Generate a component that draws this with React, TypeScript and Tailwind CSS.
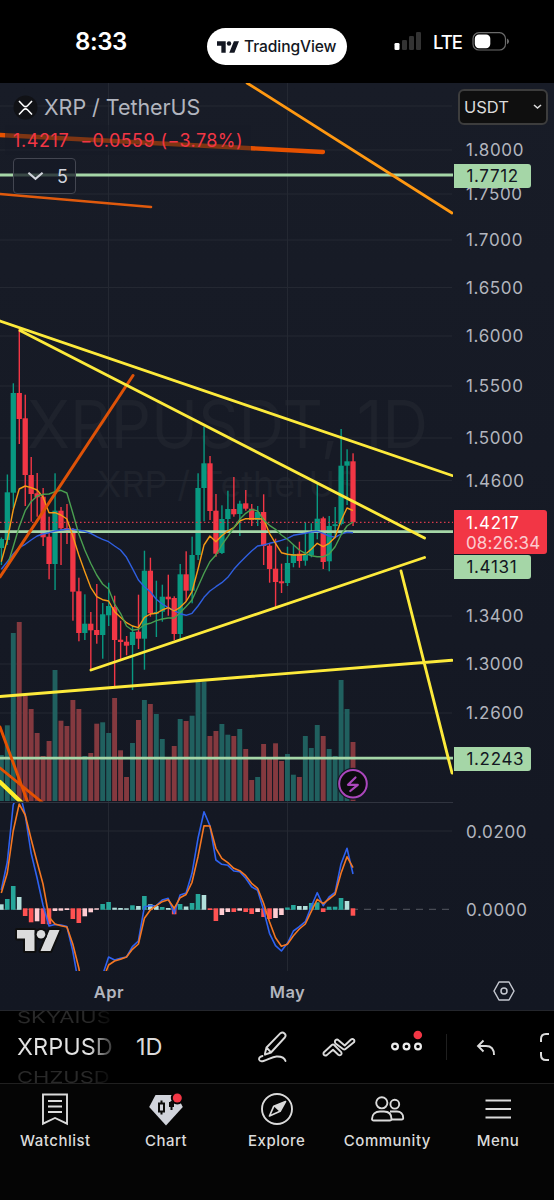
import type { ReactNode } from 'react';

type Candle = ['g' | 'r', number, number, number, number, number];

const FIRST = -18;
const xAt = (i: number) => 108.6 + 5.96 * (i + FIRST);

// direction, high, low, body top, body bottom, volume top
const CANDLES: Candle[] = [
  ['g', 537.5, 565, 539, 548, 755],
  ['g', 474.5, 545, 492.3, 540, 725.3],
  ['g', 383.3, 508.3, 393, 492.7, 633],
  ['r', 329, 444, 393, 419, 622],
  ['r', 394.7, 506, 418.3, 475, 696],
  ['r', 457, 521.7, 475, 494, 709],
  ['r', 473, 516.7, 493.3, 497.3, 733],
  ['r', 488, 546, 496.7, 537.3, 756],
  ['r', 516.7, 579.3, 536.7, 564, 741],
  ['g', 473.3, 590, 510.7, 564, 670],
  ['r', 507, 565, 510.7, 528.3, 720.7],
  ['r', 504, 544, 528, 530.7, 726],
  ['r', 528, 620.7, 529, 591.7, 700],
  ['r', 577.7, 641.3, 591.3, 633, 709],
  ['g', 594.3, 640, 623.7, 633, 756],
  ['r', 612, 670.7, 623.7, 630.3, 753],
  ['r', 584, 643.7, 630, 635, 723.7],
  ['g', 603, 658.7, 614.3, 635, 722.3],
  ['g', 582.7, 626, 606, 615.3, 733],
  ['r', 595.7, 688, 607, 640, 698],
  ['r', 620.7, 660, 639.7, 642, 750.3],
  ['r', 636, 655.3, 641.7, 645.7, 777],
  ['g', 625.7, 690, 632, 645, 743],
  ['r', 594.7, 649, 631.7, 638.7, 720],
  ['g', 550.7, 669.7, 570.7, 638.7, 700],
  ['r', 557.7, 616.7, 570.7, 613.3, 704],
  ['g', 580.7, 637, 612, 613.5, 714],
  ['g', 584.7, 621.7, 596.7, 611.7, 739],
  ['r', 574.7, 615.7, 596.7, 599.3, 758],
  ['r', 596.3, 640, 598, 634, 746],
  ['g', 564, 639, 574.3, 634, 719],
  ['r', 551.3, 601, 574.3, 590.7, 721],
  ['g', 536.7, 603.3, 555, 590.7, 715.7],
  ['g', 473.3, 560, 488, 555, 681.7],
  ['g', 426.7, 521.3, 463.3, 488, 681.7],
  ['r', 456, 520, 463.3, 511, 736],
  ['r', 494, 556.7, 510.7, 553.7, 731],
  ['g', 505.3, 554, 519, 553, 724],
  ['g', 490.7, 532.7, 509, 519, 734.7],
  ['r', 477, 516.7, 509, 514.3, 736],
  ['g', 500.7, 536, 503.7, 514, 729],
  ['r', 490, 510.7, 503.3, 508.7, 749],
  ['r', 504, 526, 508.7, 520, 780],
  ['g', 506, 526, 512, 520, 777],
  ['r', 494.3, 565, 512, 546, 744],
  ['r', 544, 582.7, 545.7, 569, 758.3],
  ['r', 538.7, 608, 568.7, 582, 743.3],
  ['r', 563.7, 593, 581.3, 583.3, 761],
  ['g', 546.7, 586, 563, 583, 754],
  ['g', 544.7, 567.3, 554, 563, 774.7],
  ['r', 541.7, 567.7, 553.7, 561, 777],
  ['g', 522.3, 565.7, 555, 560.7, 736],
  ['g', 523.3, 557.3, 532.7, 555.3, 748],
  ['g', 482.3, 539.3, 518.7, 532.7, 725],
  ['r', 516.7, 569, 518.3, 562, 736],
  ['g', 516, 571.3, 526, 561.3, 749],
  ['g', 507, 538.3, 524.3, 526, 756],
  ['g', 429, 525.3, 465.7, 524, 680],
  ['g', 449.3, 505, 461.3, 465.7, 709],
  ['r', 453.3, 526, 461.3, 522.3, 742],
];

const MA_FAST = [561.7, 540, 510, 489, 486, 487.7, 490, 497, 512.7, 512.7, 515, 519, 536, 555, 571.7, 587.3, 596.7, 599.7, 601, 611.7, 617.3, 622.7, 626, 627.7, 617.3, 614, 613.3, 610, 607.7, 611, 607.3, 601.5, 591.7, 569.3, 545, 536, 541.7, 535.7, 531, 527.7, 521, 518.7, 518.7, 518.7, 519, 533.3, 543.3, 552.7, 554.3, 555, 555, 554.3, 549.3, 543.3, 546.7, 543.3, 537.3, 520.7, 508, 510.5];
const MA_MID = [575, 566, 546.7, 526.7, 510.7, 501.7, 496, 494.3, 494, 491.7, 490.3, 493, 513, 534, 550, 563.3, 575, 584, 589, 604, 613.3, 626, 630.3, 629.3, 624.7, 623.3, 620.7, 619, 618, 618, 612.7, 606.5, 600, 586.7, 573.3, 561.7, 555, 545, 536.7, 527.7, 519.3, 513.3, 509.3, 511, 520, 525.3, 529.3, 535, 539.3, 544.7, 550, 553.3, 555.7, 556.7, 556.7, 554, 546.7, 535, 526, 522];
const MA_SLOW = [569.3, 561.7, 554, 547.7, 544.3, 540, 536, 534, 532.7, 531, 530, 529.3, 529.3, 530.3, 531.3, 533.3, 536.7, 539.3, 541.7, 546, 550, 557.3, 568.3, 580, 586.7, 591.7, 599.3, 604, 607.7, 610.7, 613.7, 615.3, 613.3, 606, 597.3, 591, 586.7, 582.7, 577.3, 569.3, 562.7, 556.7, 551, 546, 545, 543.3, 542, 540.3, 538.3, 535.3, 534.3, 533.3, 532, 531.3, 533.3, 536, 537.3, 534, 532.3, 532.7];

const MACD = [890, 862, 805, 790, 815, 853, 878, 905, 926, 924.5, 925, 926.5, 951, 985, 1010, 1020, 1005, 975, 957, 960, 958.3, 957, 946.7, 941, 906.7, 905.7, 905.7, 900, 898.3, 913.3, 895, 893, 873.3, 838.3, 811.7, 825.7, 860, 864.3, 865.3, 871, 871.7, 878.3, 886.7, 890.3, 910, 933.3, 945.7, 951, 943.3, 931, 926.7, 921.7, 906.7, 892.7, 905.7, 897, 892.3, 864, 848.3, 874];
const SIGNAL = [893, 873, 831, 804, 815, 839, 862, 884, 917, 924, 925.7, 927, 944, 968, 1000, 1015, 1005, 980, 965, 961, 959.3, 957, 949.3, 944, 918.3, 910, 905.7, 901.7, 899.7, 908.3, 897.7, 894.5, 882.3, 856.7, 825.7, 826, 848.3, 858.3, 862.7, 868.3, 870.7, 875.7, 883.3, 888.3, 903.3, 921.7, 937.7, 946.3, 944.3, 935.7, 929, 924, 911.7, 899.3, 903.7, 899, 894.3, 873.3, 856.7, 867.7];

// histogram: G/R strong, g/r fading
const HIST_KIND = 'gGGgRRrRRrrrRRrrrGGgggGgGggGgRGgGGgRRrrRrRRrRRrrGGggGGRGGGgR';
const HIST_Y = [904.3, 899, 886, 897, 916, 922.3, 921.3, 924, 924.3, 911, 910.7, 910, 919, 923, 916.3, 912.3, 909.7, 904, 902, 907.7, 908, 908.3, 905.3, 906, 896, 904.3, 906, 907, 908, 914.3, 904, 906.5, 903, 894, 895, 910, 921, 915, 912, 912, 910.7, 912, 914, 912, 917, 919, 918, 915, 907.5, 905, 906, 906, 903, 902.3, 912, 906.7, 906.7, 898, 901, 915.7];
const HIST_FILL: Record<string, string> = { G: '#26a69a', g: '#b2dfdb', R: '#ff5252', r: '#ffcdd2' };

const GRID_Y = [106, 150, 194, 240, 287.5, 336, 386, 438, 480.5, 569.5, 616, 664, 713];

const TICKS: [string, number][] = [
  ['1.8000', 150],
  ['1.7500', 194],
  ['1.7000', 240],
  ['1.6500', 287.5],
  ['1.6000', 336],
  ['1.5500', 386],
  ['1.5000', 437.5],
  ['1.4600', 480.5],
  ['1.3400', 616],
  ['1.3000', 664],
  ['1.2600', 713],
  ['0.0200', 831.5],
  ['0.0000', 909.5],
];

const LEVELS: [string, number][] = [
  ['1.7712', 175.5],
  ['1.4131', 566.5],
  ['1.2243', 758.5],
];

const toPoints = (ys: number[]) => ys.map((y, i) => `${xAt(i).toFixed(1)},${y}`).join(' ');

function StatusBar() {
  return (
    <header className="flex h-[83px] w-full shrink-0 items-start bg-black text-white">
      <div className="ml-[75px] mt-[27px] w-[132px] text-[24px] font-semibold leading-[30px] tracking-[-0.4px]">8:33</div>
      <div className="mt-[28px] flex h-[37px] w-[140px] items-center rounded-full bg-white pl-[10px] text-[#131722]">
        <svg width="22" height="12" viewBox="0 0 43 22" fill="currentColor">
          <path d="M0 0h17v22H8.500V8.500H0zM33 0h10l-9 22H24z" />
          <circle cx="23.500" cy="4.300" r="4.300" />
        </svg>
        <span className="ml-[5px] text-[15.6px] font-medium tracking-[-0.1px]">TradingView</span>
      </div>
      <svg className="ml-[47px] mt-[32px]" width="28" height="19">
        <rect x="0.500" y="11" width="5" height="7" rx="1.300" fill="#fff" />
        <rect x="8" y="8" width="5" height="10" rx="1.300" fill="#333" />
        <rect x="15" y="4" width="5" height="14" rx="1.300" fill="#333" />
        <rect x="22" y="0" width="5" height="18" rx="1.300" fill="#333" />
      </svg>
      <span className="ml-[11px] mt-[29px] w-[29px] text-[18.5px] font-medium leading-[27px] tracking-[-1px]">LTE</span>
      <svg className="ml-[10px] mt-[32px]" width="38" height="19">
        <rect x="1" y="0.700" width="32.500" height="17.300" rx="6" fill="none" stroke="#6b6b6b" strokeWidth="1.200" />
        <rect x="2.800" y="2.500" width="15.500" height="13.700" rx="4.200" fill="#fff" />
        <path d="M35 6.500q2 1 2 2.800t-2 2.900z" fill="#6b6b6b" />
      </svg>
    </header>
  );
}

function PriceChart() {
  return (
    <svg className="block" width="453" height="927" viewBox="0 83 453 927">
      <defs>
        <clipPath id="pricePane">
          <rect x="0" y="83" width="453" height="718.500" />
        </clipPath>
        <clipPath id="macdPane">
          <rect x="0" y="803" width="453" height="168" />
        </clipPath>
      </defs>

      {/* Watermark */}
      <g fill="#1e222c">
        <text x="27" y="447.500" fontSize="66" textLength="401" lengthAdjust="spacingAndGlyphs">XRPUSDT, 1D</text>
        <text x="97" y="496.500" fontSize="36" textLength="261" lengthAdjust="spacingAndGlyphs">XRP / TetherUS</text>
      </g>

      {/* Grid */}
      <g stroke="#242832" strokeWidth="1">
        {GRID_Y.map((y) => (
          <path key={y} d={`M0 ${y}H452`} />
        ))}
        <path d="M0 831H452M108.500 83V971M287.500 83V971" />
      </g>

      <g clipPath="url(#pricePane)">
        {CANDLES.map(([dir, , , , , vol], i) => (
          <rect key={i} x={xAt(i) - 2.400} y={vol} width="4.900" height={801 - vol} fill={dir === 'g' ? '#20605f' : '#84393f'} />
        ))}

        {CANDLES.map(([dir, high, low, top, bottom], i) => (
          <g key={i} fill={dir === 'g' ? '#089981' : '#f23645'}>
            <rect x={xAt(i) - 0.600} y={high} width="1.400" height={low - high} />
            <rect x={xAt(i) - 2.600} y={top} width="5.300" height={Math.max(bottom - top, 1.800)} />
          </g>
        ))}

        {/* Horizontal levels */}
        <g stroke="#a5d6a7" strokeWidth="2.800">
          <path d="M0 175H453M0 531.600H453M0 758.200H453" />
        </g>
        <path d="M0 522.300H453" stroke="#d83a4b" strokeWidth="1.300" strokeDasharray="1.500 2.500" />

        <g fill="none" strokeWidth="1.400" strokeLinejoin="round">
          <polyline points={toPoints(MA_SLOW)} stroke="#2f5fe0" />
          <polyline points={toPoints(MA_FAST)} stroke="#f59a16" />
          <polyline points={toPoints(MA_MID)} stroke="#4a9f50" />
        </g>

        {/* Trend lines */}
        <g fill="none" strokeLinecap="round">
          <path d="M247 83L452 213" stroke="#ff9811" strokeWidth="2.800" />
          <path d="M0 135L323 152" stroke="#e65100" strokeWidth="4.300" />
          <path d="M0 194L151 207" stroke="#e05a0d" strokeWidth="2.600" />
          <path d="M133 375.500L0 577" stroke="#de5207" strokeWidth="3" />
          <path d="M0 727L28 803M0 768L43 803" stroke="#e65100" strokeWidth="2.900" />
          <path d="M0 782L22 803" stroke="#ffee2a" strokeWidth="4.200" />
          <path
            d="M0 321L452 475.500M20 330.500L424.500 538M91 670L424.500 557.500M0 696.500L452 660.300M401 571L452 773"
            stroke="#fdea3b"
            strokeWidth="2.900"
          />
        </g>
      </g>

      <path d="M0 802.500H453" stroke="#30343f" />

      <g clipPath="url(#macdPane)">
        <path d="M0 909.300H453" stroke="#565962" strokeWidth="1" strokeDasharray="7 6" />
        {HIST_Y.map((y, i) => {
          const up = y < 909;
          const top = up && HIST_KIND[i] !== 'r' ? y : 908.300;
          const bottom = up ? 909.800 : y;
          return <rect key={i} x={xAt(i) - 2.300} y={top} width="4.600" height={Math.max(bottom - top, 1.400)} fill={HIST_FILL[HIST_KIND[i]]} />;
        })}
        <g fill="none" strokeWidth="1.600" strokeLinejoin="round">
          <polyline points={toPoints(MACD)} stroke="#2f62f0" />
          <polyline points={toPoints(SIGNAL)} stroke="#f57722" />
        </g>
      </g>

      {/* TradingView mark */}
      <g fill="#dbdbdb" stroke="#0f0f0f" strokeWidth="4" paintOrder="stroke" strokeLinejoin="round">
        <path d="M17 930h17.500v21H25v-12.500h-8zM49.500 930h10l-9 21H40.500z" />
        <circle cx="41" cy="934.300" r="4.300" />
      </g>

      {/* Event marker */}
      <circle cx="353" cy="783.700" r="16" fill="#131722" />
      <circle cx="353" cy="783.700" r="13.800" fill="#0c0c0f" stroke="#ab47bc" strokeWidth="2" />
      <path d="M355.500 777.500L348 784.800h9.800L350.300 791" fill="none" stroke="#ab47bc" strokeWidth="2.200" strokeLinejoin="round" strokeLinecap="round" />

      <g fill="#b2b5be" fontSize="16.500" fontWeight="600" textAnchor="middle" letterSpacing="0.500">
        <text x="109" y="997.500">Apr</text>
        <text x="287.500" y="997.500">May</text>
      </g>
    </svg>
  );
}

function Legend() {
  return (
    <div className="absolute left-[5px] top-[11px] flex flex-col items-start">
      <div className="flex h-[27px] items-center">
        <svg className="ml-[8px]" width="25" height="25" viewBox="0 0 25 25">
          <circle cx="12.500" cy="12.500" r="12" fill="#111216" />
          <path d="M6 6l4.500 4.700q2 2 4 0L19 6M6 19.500l4.500-4.700q2-2 4 0l4.500 4.700" fill="none" stroke="#fff" strokeWidth="1.600" />
        </svg>
        <span className="ml-[6px] whitespace-nowrap text-[21.5px] tracking-[-0.05px] text-[#b2b5be]">XRP / TetherUS</span>
      </div>
      <div className="mt-[4px] flex h-[30px] w-[246px] items-center gap-[11px] whitespace-nowrap bg-[#161a25]/50 pl-[8px] text-[18px] text-[#f23645]">
        <span className="tracking-[0.6px]">1.4217</span>
        <span className="tracking-[0.4px]">−0.0559 (−3.78%)</span>
      </div>
      <div className="ml-[8px] mt-[3px] flex h-[36px] w-[63px] items-center rounded-[4px] border border-[#434651] bg-[#161a25]/75 pl-[13px] text-[18px] text-[#d1d4dc]">
        <svg width="17" height="10" viewBox="0 0 18 10">
          <path d="M1.500 1.500L9 8l7.500-6.500" fill="none" stroke="currentColor" strokeWidth="2.200" />
        </svg>
        <span className="ml-[13px]">5</span>
      </div>
    </div>
  );
}

function PriceScale() {
  return (
    <aside className="relative w-[101px] text-[17px] leading-[24px] tracking-[0.65px] text-[#b2b5be]">
      {TICKS.map(([label, y]) => (
        <span key={label} className="absolute left-[13px]" style={{ top: y - 95 }}>
          {label}
        </span>
      ))}
      {LEVELS.map(([label, y]) => (
        <span
          key={label}
          className="absolute left-[1px] h-[24px] w-[77px] rounded-r-[3px] bg-[#a5d6a7] pl-[12.5px] text-[#131722]"
          style={{ top: y - 95 }}
        >
          {label}
        </span>
      ))}
      <div className="absolute left-[1px] top-[427px] flex h-[44px] w-[93px] flex-col rounded-r-[3px] bg-[#f23645] pl-[12px] pt-[3px] leading-[20px] text-white">
        <span>1.4217</span>
        <span className="text-white/75 tracking-[0.1px]">08:26:34</span>
      </div>
      <button className="absolute left-[5px] top-[6px] flex h-[36px] w-[90px] items-center rounded-[6px] border-2 border-[#3d3d3d] bg-[#0f0f0f] pl-[4px] text-[16.5px] tracking-[0px] text-[#dbdbdb]">
        USDT
        <svg className="ml-[24px]" width="9" height="6" viewBox="0 0 9 6">
          <path d="M1 1l3.500 3L8 1" fill="none" stroke="currentColor" strokeWidth="1.600" />
        </svg>
      </button>
      <svg className="absolute left-[40px] top-[898px]" width="22" height="20" viewBox="0 0 22 20" fill="none" stroke="#c5c8d0" strokeWidth="1.500">
        <path d="M6 1h10l5 9-5 9H6l-5-9z" strokeLinejoin="round" />
        <circle cx="11" cy="10" r="3" />
      </svg>
    </aside>
  );
}

function Toolbar() {
  return (
    <div className="flex h-[73px] shrink-0 items-center overflow-hidden border-t border-[#24262c] bg-black text-[#dbdbdb]">
      <div className="ml-[17px] flex h-full w-[96px] shrink-0 flex-col justify-center overflow-hidden whitespace-nowrap text-[23.5px] leading-[30px]">
        <span className="h-[30px] shrink-0 scale-y-75 bg-gradient-to-r from-[#292929] from-75% to-[#080808] bg-clip-text text-[22px] text-transparent">SKYAIUS</span>
        <span className="h-[30px] shrink-0 bg-gradient-to-r from-[#e3e3e3] from-75% to-[#333] bg-clip-text text-transparent">XRPUSD</span>
        <span className="h-[30px] shrink-0 scale-y-75 bg-gradient-to-r from-[#292929] from-75% to-[#080808] bg-clip-text text-[22px] text-transparent">CHZUSD</span>
      </div>
      <span className="ml-[23px] w-[122px] shrink-0 text-[23.5px]">1D</span>
      <svg className="shrink-0" width="30" height="32" viewBox="0 0 30 32" fill="none" stroke="currentColor" strokeWidth="1.900" strokeLinecap="round" strokeLinejoin="round">
        <path d="M7 22.500l1.500-6L22.500 2.200q2-1.500 4 .300t.3 4L13 21.500l-6 2.200zM8.500 16.500l4.500 4.800" />
        <path d="M4.500 25q-4 1-3.300 3.800.8 2.200 4.300 1.200c5-1.500 8.500-4.200 13-4.500 5-.2 8 1 9 4.500" />
      </svg>
      <svg className="ml-[34px] shrink-0" width="34" height="22" viewBox="0 0 34 22" fill="none" stroke="currentColor" strokeWidth="1.900" strokeLinejoin="round">
        <path d="M2 16.200L9.800 9q1.200-1 2.400 0l7 7.200q.9 1.500-.3 2.600-1.300 1-2.600-.1L11 13.800l-6.200 5.300q-1.700 1-2.900-.2-.9-1.400.1-2.700z" />
        <path d="M13.500 7.500q-1.200-2 0-3.300 1.600-1.300 3 0l6.200 5.300 6.300-6q1.500-1.100 2.900.1 1 1.400 0 2.700L23.500 13q-1.200 1-2.500 0z" />
      </svg>
      <svg className="ml-[34px] -mt-[7px] shrink-0" width="34" height="30" viewBox="0 0 34 30">
        <g fill="none" stroke="#ececec" strokeWidth="2.200">
          <circle cx="5" cy="17.500" r="2.900" />
          <circle cx="16.500" cy="17.500" r="2.900" />
          <circle cx="28" cy="17.500" r="2.900" />
        </g>
        <circle cx="27.800" cy="6" r="4.300" fill="#f23645" />
      </svg>
      <span className="ml-[22px] h-[26px] w-px shrink-0 bg-[#1f1f1f]" />
      <svg className="ml-[29px] shrink-0" width="20" height="17" viewBox="0 0 20 17" fill="none" stroke="currentColor" strokeWidth="1.900">
        <path d="M7.500 1.500L2 7l5.500 5.500M2 7h8q8 0 8 9" />
      </svg>
      <svg className="ml-[43px] shrink-0" width="10" height="30" viewBox="0 0 10 30" fill="none" stroke="currentColor" strokeWidth="2">
        <path d="M2 10V7q0-5 5-5h3M2 20v3q0 5 5 5h3" />
      </svg>
    </div>
  );
}

function NavItem({ label, children }: { label: string; children: ReactNode }) {
  return (
    <a className="flex w-[110.700px] shrink-0 flex-col items-center text-[#dbdbdb]">
      <svg width="36" height="36" viewBox="0 0 36 36" fill="none" stroke="currentColor" strokeWidth="1.900">
        {children}
      </svg>
      <span className="mt-[4px] text-[15px] font-medium leading-[20px] tracking-[0.5px]">{label}</span>
    </a>
  );
}

function BottomNav() {
  return (
    <nav className="flex h-[117px] shrink-0 border-t border-[#202020] bg-[#050505] pt-[7px]">
      <NavItem label="Watchlist">
        <path d="M6 3.500h24v29.200l-12-5.700-12 5.700zM11 10h14M11 15.500h14M11 21h14" />
      </NavItem>
      <NavItem label="Chart">
        <path d="M7.500 4h21l6.300 12L18 34.500 1.200 16z" fill="#d1d4dc" stroke="none" />
        <path d="M13.500 9.500v14M23.500 10v9" stroke="#0b0b0b" strokeWidth="2" />
        <rect x="11" y="12.500" width="5" height="8" fill="#d1d4dc" stroke="#0b0b0b" strokeWidth="2" />
        <rect x="21" y="11" width="5" height="5" fill="#0b0b0b" stroke="none" />
        <circle cx="29.300" cy="7" r="6.500" fill="#050505" stroke="none" />
        <circle cx="29.300" cy="7" r="4.500" fill="#f23645" stroke="none" />
      </NavItem>
      <NavItem label="Explore">
        <circle cx="18" cy="18" r="15" />
        <path d="M26.500 10.500L14.800 15.200 10.500 25l10.600-4.700z" strokeLinejoin="round" strokeWidth="1.700" />
        <path d="M26.500 10.500L14.800 15.200l5.800 5.500z" fill="currentColor" stroke="none" />
      </NavItem>
      <NavItem label="Community">
        <circle cx="12.800" cy="11.800" r="5.600" />
        <circle cx="25.800" cy="13.200" r="4.400" />
        <path d="M3 28c0-5 3.500-7.500 8-7.500h4c4.500 0 7.500 2.500 7.500 7.500 0 1-.7 1.500-1.700 1.500H4.700C3.600 29.500 3 29 3 28z" />
        <path d="M21 20.500h7c3.500 0 6.200 2.500 6.200 6.500 0 1-.6 1.500-1.600 1.500H23" />
      </NavItem>
      <NavItem label="Menu">
        <path d="M5.500 9.500h25.500M5.500 18h25.500M5.500 26.500h25.500" />
      </NavItem>
    </nav>
  );
}

export default function App() {
  return (
    <div className="flex h-[1200px] w-[554px] flex-col overflow-hidden bg-black font-['Inter',sans-serif]">
      <StatusBar />
      <main className="relative flex h-[927px] shrink-0 bg-gradient-to-b from-[#181c27] to-[#131722]">
        <PriceChart />
        <PriceScale />
        <Legend />
      </main>
      <Toolbar />
      <BottomNav />
    </div>
  );
}
